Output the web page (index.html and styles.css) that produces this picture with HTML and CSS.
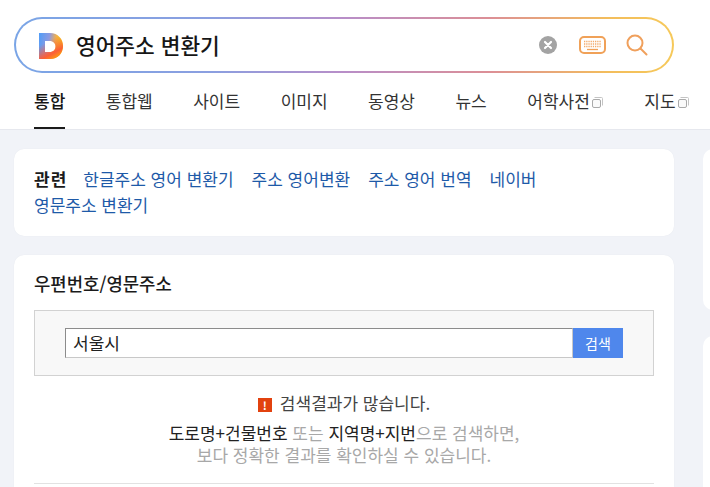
FILE: index.html
```html
<!DOCTYPE html>
<html lang="ko">
<head>
<meta charset="utf-8">
<title>영어주소 변환기</title>
<link rel="stylesheet" href="styles.css">
</head>
<body>
<header class="header">
  <div class="search-ring">
    <div class="search-box">
      <svg class="logo" width="26" height="28" viewBox="0 0 26 28" aria-hidden="true">
        <defs>
          <linearGradient id="lgh" x1="0" y1="0" x2="1" y2="0.2">
            <stop offset="0" stop-color="#4f9df8"/>
            <stop offset="0.45" stop-color="#8f9ae0"/>
            <stop offset="0.72" stop-color="#f2b04a"/>
            <stop offset="1" stop-color="#f6da0c"/>
          </linearGradient>
          <linearGradient id="lgv" x1="0.2" y1="0.4" x2="0.5" y2="1">
            <stop offset="0" stop-color="#fb5a3a" stop-opacity="0"/>
            <stop offset="0.75" stop-color="#fb5f38" stop-opacity="1"/>
            <stop offset="1" stop-color="#fd8a1c" stop-opacity="1"/>
          </linearGradient>
        </defs>
        <path fill="url(#lgh)" fill-rule="evenodd" d="M1 1H12C20 1 25 7 25 14S20 27 12 27H1ZM7 9V20H11.500C15.500 20 17.500 17.500 17.500 14.500S15.500 9 11.500 9Z"/>
        <path fill="url(#lgv)" fill-rule="evenodd" d="M1 1H12C20 1 25 7 25 14S20 27 12 27H1ZM7 9V20H11.500C15.500 20 17.500 17.500 17.500 14.500S15.500 9 11.500 9Z"/>
      </svg>
      <span class="query">영어주소 변환기</span>
      <svg class="ic-clear" width="18" height="18" viewBox="0 0 18 18" aria-hidden="true">
        <circle cx="9" cy="9" r="9" fill="#a3a3a3"/>
        <path d="M6 6L12 12M12 6L6 12" stroke="#fff" stroke-width="2.200" stroke-linecap="round"/>
      </svg>
      <svg class="ic-kbd" width="27" height="18" viewBox="0 0 27 18" aria-hidden="true">
        <rect x="1" y="1" width="25" height="16" rx="4" fill="#fff" stroke="#f0a158" stroke-width="2"/>
        <path d="M5 5.500H22M5 8H22M5 10.500H22" stroke="#f2ab6b" stroke-width="1.400" stroke-dasharray="1.300 0.900"/>
        <path d="M8 13.500H19" stroke="#f0a158" stroke-width="1.300"/>
      </svg>
      <svg class="ic-search" width="22" height="22" viewBox="0 0 22 22" aria-hidden="true">
        <circle cx="9" cy="9" r="7.500" fill="none" stroke="#f0a05c" stroke-width="2"/>
        <path d="M14.500 14.500L20.500 20.500" stroke="#f0a05c" stroke-width="2" stroke-linecap="round"/>
      </svg>
    </div>
  </div>
  <nav class="tabs">
    <a class="tab tab-active">통합</a>
    <a class="tab">통합웹</a>
    <a class="tab">사이트</a>
    <a class="tab">이미지</a>
    <a class="tab">동영상</a>
    <a class="tab">뉴스</a>
    <a class="tab">어학사전<svg class="ext" width="13" height="13" viewBox="0 0 13 13" aria-hidden="true"><path d="M3.500 1.500H10.500Q11.500 1.500 11.500 2.500V9.500" fill="none" stroke="#c4c4c4"/><rect x="1.500" y="3.500" width="8" height="8" rx="1.500" fill="#fafafa" stroke="#aaa"/></svg></a>
    <a class="tab">지도<svg class="ext" width="13" height="13" viewBox="0 0 13 13" aria-hidden="true"><path d="M3.500 1.500H10.500Q11.500 1.500 11.500 2.500V9.500" fill="none" stroke="#c4c4c4"/><rect x="1.500" y="3.500" width="8" height="8" rx="1.500" fill="#fafafa" stroke="#aaa"/></svg></a>
  </nav>
</header>
<div class="page">
  <main class="main">
    <section class="card related">
      <p class="related-text"><strong class="related-label">관련</strong><a class="rel">한글주소 영어 변환기</a><a class="rel">주소 영어변환</a><a class="rel">주소 영어 번역</a><a class="rel">네이버</a><a class="rel rel-wrap">영문주소 변환기</a></p>
    </section>
    <section class="card post">
      <h2 class="post-title">우편번호/영문주소</h2>
      <div class="form-band">
        <div class="form-row">
          <div class="input">서울시</div>
          <div class="btn">검색</div>
        </div>
      </div>
      <p class="warn"><span class="warn-ic">!</span>검색결과가 많습니다.</p>
      <p class="hint"><span class="dark">도로명+건물번호</span> 또는 <span class="dark">지역명+지번</span>으로 검색하면,<br>보다 정확한 결과를 확인하실 수 있습니다.</p>
      <div class="rule"></div>
    </section>
  </main>
  <aside class="side">
    <div class="side-card side-a"></div>
    <div class="side-card side-b"></div>
  </aside>
</div>
</body>
</html>
```
FILE: styles.css
```css
* { box-sizing: border-box; }
html, body { margin: 0; height: 487px; overflow: hidden; }
body {
  background: #f1f3f8;
  font-family: "Noto Sans CJK KR", "Liberation Sans", sans-serif;
  color: #1b1b1b;
}
.header {
  height: 130px;
  background: #fff;
  border-bottom: 1px solid #e6e8ee;
  padding: 17px 0 0 14px;
}
.search-ring {
  width: 660px;
  height: 56px;
  padding: 2px;
  border-radius: 28px;
  background: linear-gradient(90deg, #7aa5e6 0%, #8b9fe0 30%, #b88ec8 50%, #dc8f96 72%, #f3bd5c 90%, #f6c95a 100%);
}
.search-box {
  height: 52px;
  border-radius: 26px;
  background: #fff;
  display: flex;
  align-items: center;
  padding-left: 22px;
}
.logo { flex: none; margin-right: 12px; margin-top: 1px; }
.query {
  flex: 1;
  font-size: 21.400px;
  font-weight: 500;
  color: #161616;
  line-height: 26px;
}
.ic-clear { flex: none; margin-right: 22px; }
.ic-kbd { flex: none; margin-right: 20px; }
.ic-search { flex: none; margin-right: 24px; }
.tabs {
  display: flex;
  gap: 40.500px;
  margin-left: 20px;
  height: 56px;
}
.tab {
  display: block;
  white-space: nowrap;
  font-size: 17px;
  line-height: 24px;
  padding-top: 16px;
  color: #333;
  height: 56px;
  flex: none;
}
.tab-active {
  font-weight: 500;
  color: #161616;
  border-bottom: 2px solid #1b1b1b;
}
.ext { margin-left: 1px; vertical-align: -1px; }
.page {
  display: flex;
  padding: 19px 0 0 14px;
  gap: 29px;
}
.main { width: 660px; flex: none; }
.card {
  background: #fff;
  border-radius: 10px;
  box-shadow: 0 0 1px rgba(30, 40, 80, .08);
  padding: 0 20px;
}
.related { height: 87px; padding-top: 17px; margin-bottom: 19px; }
.related-text {
  margin: 0;
  font-size: 17px;
  line-height: 26px;
  color: #1e5aa8;
}
.related-label { font-weight: 700; letter-spacing: 1px; color: #1b1b1b; margin-right: 16px; }
.rel { margin-right: 18px; }
.rel-wrap { display: block; margin: 0; }
.post {
  height: 232px;
  padding-top: 16px;
  border-radius: 10px 10px 0 0;
}
.post-title {
  margin: 0 0 15px;
  font-size: 17.800px;
  line-height: 24px;
  font-weight: 500;
  color: #1b1b1b;
}
.form-band {
  height: 66px;
  background: #f8f8f8;
  border: 1px solid #d2d2d2;
  padding: 17px 30px 0;
}
.form-row { display: flex; height: 30px; }
.input {
  flex: 1;
  background: #fff;
  border: 1px solid #c8c8c8;
  border-top-color: #8c8c8c;
  border-left-color: #8c8c8c;
  padding-left: 7px;
  font-size: 17px;
  line-height: 27px;
  color: #222;
}
.btn {
  width: 50px;
  background: #4f87ec;
  color: #fff;
  text-align: center;
  font-size: 14px;
  line-height: 30px;
}
.warn {
  margin: 16px 0 0;
  text-align: center;
  font-size: 17px;
  line-height: 22px;
  color: #444;
}
.warn-ic {
  display: inline-block;
  width: 14px;
  height: 14px;
  background: #e2420f;
  color: #fff;
  font-size: 11px;
  font-weight: 700;
  line-height: 14px;
  text-align: center;
  margin-right: 8px;
  vertical-align: 0;
}
.hint {
  margin: 8px 0 0;
  text-align: center;
  font-size: 17px;
  line-height: 22px;
  color: #a8a8a8;
}
.dark { color: #222; }
.rule { margin-top: 17px; height: 1px; background: #e2e2e2; }
.side { flex: none; width: 7px; display: flex; flex-direction: column; gap: 26px; }
.side-card { background: #fff; width: 30px; border-radius: 10px 0 0 10px; }
.side-a { height: 161px; }
.side-b { height: 151px; border-radius: 10px 0 0 0; }
```
